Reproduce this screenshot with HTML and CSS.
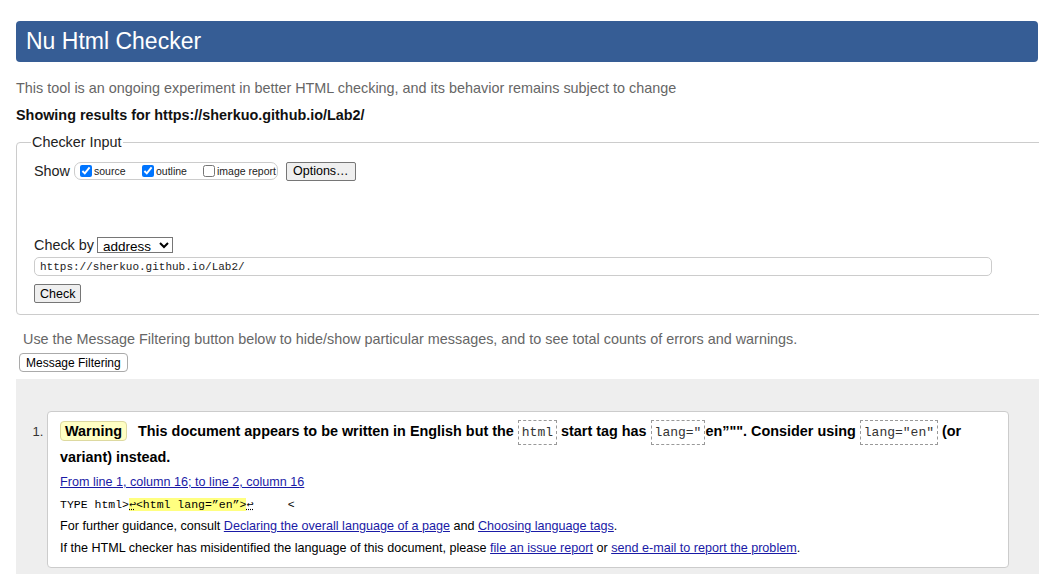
FILE: index.html
```html
<!DOCTYPE html>
<html lang="en">
<head>
<meta charset="utf-8">
<title>Nu Html Checker</title>
<link rel="stylesheet" href="styles.css">
</head>
<body>
<div class="page">
  <h1 class="banner">Nu Html Checker</h1>
  <p class="intro">This tool is an ongoing experiment in better HTML checking, and its behavior remains subject to change</p>
  <p class="showing">Showing results for https://sherkuo.github.io/Lab2/</p>

  <fieldset class="input">
    <legend>Checker Input</legend>
    <div class="show-row">
      <span class="lbl">Show</span>
      <span class="opts">
        <label class="opt"><input type="checkbox" checked>source</label>
        <label class="opt"><input type="checkbox" checked>outline</label>
        <label class="opt"><input type="checkbox">image report</label>
      </span>
      <button class="btn">Options…</button>
    </div>
    <div class="checkby-row">
      <span class="lbl">Check by</span>
      <select class="sel"><option>address</option></select>
    </div>
    <input class="url" type="text" value="https://sherkuo.github.io/Lab2/">
    <div><button class="btn check">Check</button></div>
  </fieldset>

  <p class="filter-note">Use the Message Filtering button below to hide/show particular messages, and to see total counts of errors and warnings.</p>
  <button class="filter-btn">Message Filtering</button>

  <div class="results">
    <ol class="msgs">
      <li class="msg">
        <p class="head"><span class="badge">Warning</span> <span class="text">This document appears to be written in English but the <code>html</code> start tag has <code>lang="</code>en”"". Consider using <code>lang="en"</code> (or variant) instead.</span></p>
        <p class="loc"><a href="#">From line 1, column 16; to line 2, column 16</a></p>
        <p class="extract">TYPE html&gt;<mark><span class="lf">↩</span>&lt;html lang=”en”&gt;</mark><span class="lf">↩</span>&nbsp;&nbsp;&nbsp;&nbsp;&nbsp;&lt;</p>
        <p class="info">For further guidance, consult <a href="#">Declaring the overall language of a page</a> and <a href="#">Choosing language tags</a>.</p>
        <p class="info">If the HTML checker has misidentified the language of this document, please <a href="#">file an issue report</a> or <a href="#">send e-mail to report the problem</a>.</p>
      </li>
    </ol>
  </div>
</div>
</body>
</html>
```
FILE: styles.css
```css
html, body {
  margin: 0;
  padding: 0;
  background: #fff;
}
body {
  overflow: hidden;
  font-family: "Liberation Sans", Arial, sans-serif;
  font-size: 14.4px;
  color: #000;
}
.page {
  width: 1040px;
  padding: 21px 0 0 16px;
}
.banner {
  margin: 0;
  width: 1022px;
  height: 41px;
  box-sizing: border-box;
  padding-left: 10px;
  background: #365d95;
  color: #fff;
  font-weight: normal;
  font-size: 23px;
  line-height: 41px;
  border-radius: 4px;
}
.intro {
  margin: 18px 0 0;
  line-height: 16px;
  color: #666;
}
.showing {
  margin: 11px 0 0;
  line-height: 16px;
  font-weight: bold;
  color: #111;
}
.input {
  margin: 11px 0 0;
  padding: 11px 0 11px 17px;
  border: 1px solid #ccc;
  border-radius: 4px;
  min-width: 0;
  width: 1040px;
  box-sizing: border-box;
}
.input legend {
  padding: 0 1px;
  margin-left: -3px;
  font-size: 14.4px;
  line-height: 16px;
  color: #222;
}
.lbl {
  color: #222;
  font-size: 14.4px;
}
.show-row {
  display: flex;
  align-items: center;
  height: 20px;
}
.opts {
  display: inline-flex;
  align-items: center;
  margin-left: 4px;
  height: 18px;
  width: 204px;
  box-sizing: border-box;
  border: 1px solid #ccc;
  border-radius: 7px;
  padding-left: 4px;
}
.opt {
  display: inline-flex;
  align-items: center;
  font-size: 10.5px;
  color: #222;
}
.opt:nth-child(1) { width: 62px; }
.opt:nth-child(2) { width: 61px; }
.opt input {
  width: 12px;
  height: 12px;
  margin: 0 2px 0 1px;
}
.btn {
  margin-left: 8px;
  height: 19px;
  padding: 0 6px;
  font-family: "Liberation Sans", Arial, sans-serif;
  font-size: 12.5px;
  color: #000;
  background: #efefef;
  border: 1px solid #767676;
  border-radius: 2px;
}
.checkby-row {
  display: flex;
  align-items: center;
  margin-top: 54px;
  height: 19px;
}
.sel {
  margin-left: 3px;
  width: 76px;
  height: 16px;
  padding: 0 0 0 1px;
  font-family: "Liberation Sans", Arial, sans-serif;
  font-size: 13.5px;
  border: 1px solid #767676;
  border-radius: 0;
  background: #fff;
  color: #000;
}
.url {
  display: block;
  margin-top: 3px;
  width: 958px;
  height: 19px;
  box-sizing: border-box;
  padding: 0 5px;
  border: 1px solid #ccc;
  border-radius: 5px;
  font-family: "Liberation Mono", "DejaVu Sans Mono", monospace;
  font-size: 11px;
  color: #222;
}
.check {
  margin: 8px 0 0;
  height: 19px;
  padding: 0 5px;
}
.filter-note {
  margin: 16px 0 0 7px;
  line-height: 16px;
  color: #666;
}
.filter-btn {
  display: block;
  margin: 6px 0 0 3px;
  height: 19px;
  padding: 0 6px;
  font-family: "Liberation Sans", Arial, sans-serif;
  font-size: 12px;
  background: #fff;
  color: #000;
  border: 1px solid #aaa;
  border-radius: 4px;
}
.results {
  margin-top: 7px;
  background: #eee;
  padding: 32px 0 40px;
}
.msgs {
  margin: 0;
  padding: 0 0 0 31px;
  color: #333;
}
.msg {
  width: 962px;
  box-sizing: border-box;
  background: #fff;
  border: 1px solid #ccc;
  border-radius: 4px;
  padding: 7px 12px 8px;
}
.msg::marker {
  font-size: 13px;
  color: #333;
}
.msg p {
  margin: 0;
  color: #000;
}
.head {
  line-height: 25px;
  font-weight: bold;
  color: #111;
}
.badge {
  display: inline-block;
  line-height: 18px;
  padding: 0 4px;
  background: #ffffc4;
  border: 1px solid #ddd9a0;
  border-radius: 4px;
  margin-right: 7px;
}
code {
  font-family: "Liberation Mono", "DejaVu Sans Mono", monospace;
  font-weight: normal;
  font-size: 13px;
  padding: 4px 3px;
  border: 1px dashed #999;
  color: #333;
}
.loc {
  font-size: 12.6px;
  line-height: 24px;
}
a {
  color: #1a1aa6;
  text-decoration: underline;
}
.extract {
  font-family: "Liberation Mono", "DejaVu Sans Mono", monospace;
  font-size: 11.5px;
  line-height: 21px;
}
mark {
  background: #ffff80;
  color: #000;
}
.lf {
  text-decoration: underline dotted;
}
.info {
  font-size: 12.6px;
  line-height: 22px;
}
```
